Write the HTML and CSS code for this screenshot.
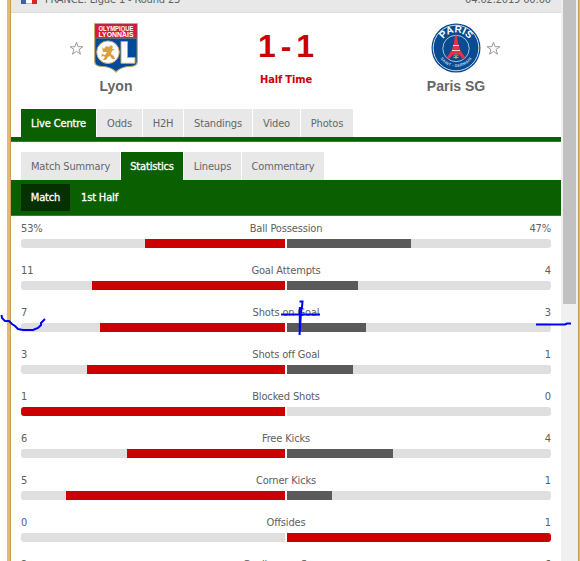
FILE: index.html
```
<!DOCTYPE html>
<html lang="en">
<head>
    <meta charset="UTF-8">
    <meta name="viewport" content="width=device-width, initial-scale=1.0">
    <title>Lyon 1-1 Paris SG | Statistics</title>
    <link rel="stylesheet" href="styles.css">
</head>
<body>
    <div class="window">
        <div class="content">
            <div class="match-header">
                <svg class="flag" width="16" height="11" viewBox="0 0 16 11">
                    <rect width="16" height="11" fill="#fff"/>
                    <rect width="5" height="11" fill="#3f62ae"/>
                    <rect x="11" width="5" height="11" fill="#e1251b"/>
                    <rect x=".5" y=".5" width="15" height="10" fill="none" stroke="#555" stroke-opacity=".4"/>
                </svg>
                <span class="league">FRANCE: Ligue 1 - Round 23</span>
                <span class="date">04.02.2019 00:00</span>
            </div>

            <div class="scoreboard">
                <div class="team home">
                    <div class="team-logo">
                        <svg class="star" width="15" height="15" viewBox="0 0 15 15"><path d="M7.5 1.2L9.1 5.7H13.9L10 8.5L11.5 13.2L7.5 10.4L3.5 13.2L5 8.5L1.1 5.7H5.9Z"/></svg>
                        <svg class="crest" width="44" height="50" viewBox="0 0 44 50">
                            <path d="M.7.7H43.3V39Q43 43 37 43.5Q27 43.5 22 49Q17 43.5 7 43.5Q1 43 .7 39Z" fill="#004a99" stroke="#c8aa6c" stroke-width="1.2"/>
                            <path d="M1.3 1.3H42.7V15H1.3Z" fill="#da1a32"/>
                            <path d="M1 15.2H43" stroke="#8b6c69"/>
                            <text x="22" y="7.7" textLength="35" lengthAdjust="spacingAndGlyphs">OLYMPIQUE</text>
                            <text x="22" y="14.1" textLength="35" lengthAdjust="spacingAndGlyphs">LYONNAIS</text>
                            <circle cx="14" cy="29.2" r="11.3" fill="#fff" stroke="#c8a665"/>
                            <path d="M8 24l2 2 2-3 3 1 2-2 2 2-1 2 3 0-3 2-1 3 3 2 1 3-3 0-2-3-2 1-2 3-3 0 2-3-2-1-2 1 1-3 3 1 2-3-4 0Z" fill="#d8a13b"/>
                            <path d="M27 18.5H33.5V34.5H41V40.3H27Z" fill="#fff" stroke="#c8a665"/>
                        </svg>
                    </div>
                    <div class="team-name">Lyon</div>
                </div>
                <div class="result">
                    <div class="score">1 - 1</div>
                    <div class="match-status">Half Time</div>
                </div>
                <div class="team away">
                    <div class="team-logo">
                        <svg class="crest" width="50" height="50" viewBox="0 0 50 50">
                            <defs>
                                <path id="arc-top" d="M9.5 25A15.5 15.5 0 0 1 40.5 25"/>
                                <path id="arc-bottom" d="M6 25A19 19 0 0 0 44 25"/>
                            </defs>
                            <circle cx="25" cy="25" r="24.5" fill="#074b91"/>
                            <circle cx="25" cy="25" r="22.8" fill="none" stroke="#dbe6f1" stroke-width=".9"/>
                            <circle cx="25" cy="25.5" r="13.2" fill="#074b91" stroke="#d5e1ed" stroke-width=".8"/>
                            <path d="M24 12.5H26L27.2 21L29.5 27.5L35 35.5H31Q29.5 31.5 25 31Q20.5 31.5 19 35.5H15L20.5 27.5L22.8 21Z" fill="#e92f43"/>
                            <path d="M21 27.5H29M22 22.5H28" stroke="#fff" stroke-width=".8"/>
                            <path d="M25 30.5V36M22.5 33q1-2 2.5 1q1.5-3 2.5-1M22.5 34.5h5" fill="none" stroke="#b8a36c"/>
                            <text class="psg-top"><textPath href="#arc-top" startOffset="50%" textLength="30">PARIS</textPath></text>
                            <text class="psg-bottom"><textPath href="#arc-bottom" startOffset="50%" textLength="37">SAINT - GERMAIN</textPath></text>
                        </svg>
                        <svg class="star" width="15" height="15" viewBox="0 0 15 15"><path d="M7.5 1.2L9.1 5.7H13.9L10 8.5L11.5 13.2L7.5 10.4L3.5 13.2L5 8.5L1.1 5.7H5.9Z"/></svg>
                    </div>
                    <div class="team-name">Paris SG</div>
                </div>
            </div>

            <ul class="tabs main-tabs">
                <li class="active w75">Live Centre</li>
                <li class="w45">Odds</li>
                <li class="w40">H2H</li>
                <li class="w68">Standings</li>
                <li class="w47">Video</li>
                <li class="w52">Photos</li>
            </ul>
            <div class="divider"></div>

            <ul class="tabs sub-tabs">
                <li class="w99">Match Summary</li>
                <li class="active w62">Statistics</li>
                <li class="w57">Lineups</li>
                <li class="w82">Commentary</li>
            </ul>
            <div class="period-bar">
                <span class="period selected">Match</span>
                <span class="period">1st Half</span>
            </div>

            <div class="stats">
                <div class="stat">
                    <div class="labels"><span>53%</span><span>Ball Possession</span><span>47%</span></div>
                    <div class="bars"><div class="bar left"><div class="fill red" style="width: 53%"></div></div><div class="bar"><div class="fill" style="width: 47%"></div></div></div>
                </div>
                <div class="stat">
                    <div class="labels"><span>11</span><span>Goal Attempts</span><span>4</span></div>
                    <div class="bars"><div class="bar left"><div class="fill red" style="width: 73.1%"></div></div><div class="bar"><div class="fill" style="width: 26.9%"></div></div></div>
                </div>
                <div class="stat">
                    <div class="labels"><span>7</span><span>Shots on Goal</span><span>3</span></div>
                    <div class="bars"><div class="bar left"><div class="fill red" style="width: 70%"></div></div><div class="bar"><div class="fill" style="width: 30%"></div></div></div>
                </div>
                <div class="stat">
                    <div class="labels"><span>3</span><span>Shots off Goal</span><span>1</span></div>
                    <div class="bars"><div class="bar left"><div class="fill red" style="width: 75%"></div></div><div class="bar"><div class="fill" style="width: 25%"></div></div></div>
                </div>
                <div class="stat">
                    <div class="labels"><span>1</span><span>Blocked Shots</span><span>0</span></div>
                    <div class="bars"><div class="bar left"><div class="fill red" style="width: 100%"></div></div><div class="bar"></div></div>
                </div>
                <div class="stat">
                    <div class="labels"><span>6</span><span>Free Kicks</span><span>4</span></div>
                    <div class="bars"><div class="bar left"><div class="fill red" style="width: 60%"></div></div><div class="bar"><div class="fill" style="width: 40%"></div></div></div>
                </div>
                <div class="stat">
                    <div class="labels"><span>5</span><span>Corner Kicks</span><span>1</span></div>
                    <div class="bars"><div class="bar left"><div class="fill red" style="width: 83%"></div></div><div class="bar"><div class="fill" style="width: 17%"></div></div></div>
                </div>
                <div class="stat">
                    <div class="labels"><span>0</span><span>Offsides</span><span>1</span></div>
                    <div class="bars"><div class="bar left"></div><div class="bar"><div class="fill red" style="width: 100%"></div></div></div>
                </div>
                <div class="stat">
                    <div class="labels"><span>2</span><span>Goalkeeper Saves</span><span>6</span></div>
                    <div class="bars"><div class="bar left"></div><div class="bar"></div></div>
                </div>
            </div>
        </div>
        <div class="scrollbar"><div class="thumb"></div></div>
    </div>

    <!-- pen marks -->
    <svg class="pen" width="580" height="561" viewBox="0 0 580 561">
        <path d="M1.5 315L2 318L5 321H9L12 324L15 326L18 329L23 330H33L38 328L41 325V323L45 319"/>
        <path d="M281 314.5H320M299.5 301.5H302.5L302 307L301 312L300.5 320L299.5 335M299.8 307V328"/>
        <path d="M536 324.5H565L567 323.5H571"/>
    </svg>
</body>
</html>
```
FILE: styles.css
```
body {
    margin: 0;
    background: #fff;
    color: #606060;
    font-family: "DejaVu Sans Condensed", Tahoma, "Noto Sans", sans-serif;
    font-size: 11px;
    letter-spacing: -0.15px;
    overflow: hidden;
}
.window {
    display: flex;
    box-sizing: border-box;
    width: 573px;
    height: 561px;
    margin-left: 7px;
    border-left: 3px solid #e9b86b;
    border-right: 1px solid #e9b86b;
    overflow: hidden;
    box-shadow: inset 1px 0 #c79c58, inset -1px 0 #c79c58;
}
.content {
    width: 550px;
    margin-left: 1px;
    flex: none;
}
.match-header {
    display: flex;
    align-items: flex-end;
    box-sizing: border-box;
    height: 13px;
    padding: 0 10px;
    background: #e8e8e8;
    border-bottom: 1px solid #dcdcdc;
    line-height: 14px;
}
.flag {
    margin-bottom: 8px;
}
.league {
    margin: 0 auto 5px 8px;
}
.date {
    margin-bottom: 5px;
}
.scoreboard {
    display: flex;
    justify-content: space-between;
    height: 96px;
    padding: 0 32px;
}
.team {
    width: 146px;
    padding-top: 10px;
    text-align: center;
}
.team-logo {
    display: flex;
    align-items: center;
    height: 50px;
}
.home .team-logo {
    padding-left: 26px;
    gap: 10px;
}
.away .team-logo {
    padding-left: 48px;
    gap: 5px;
}
.star path {
    fill: #fff;
    stroke: #999;
}
.crest text {
    fill: #fff;
    font-family: "Liberation Sans", sans-serif;
    font-weight: bold;
    font-size: 7px;
    letter-spacing: 0;
    text-anchor: middle;
}
.crest .psg-top {
    font-size: 10px;
}
.crest .psg-bottom {
    font-size: 4px;
    fill: #bdd0e3;
}
.team-name {
    color: #666;
    font: bold 14px/18px "Liberation Sans", Arial, sans-serif;
    letter-spacing: 0;
    padding-top: 4px;
}
.result {
    width: 120px;
    color: #c00;
    text-align: center;
}
.score {
    padding-top: 13px;
    font: bold 32px/40px "Liberation Sans", Arial, sans-serif;
    letter-spacing: 0;
    word-spacing: -4px;
}
.match-status {
    font-weight: bold;
    line-height: 14px;
    padding-top: 7px;
}
.tabs {
    display: flex;
    gap: 1px;
    margin: 0;
    padding: 0 10px;
    list-style: none;
}
.tabs li {
    height: 28px;
    background: #e8e8e8;
    color: #666;
    line-height: 30px;
    text-align: center;
    white-space: nowrap;
}
.tabs .active {
    background: #0a5f00;
    color: #fff;
    -webkit-text-stroke: 0.3px #fff;
}
.w40 { width: 40px; }
.w45 { width: 45px; }
.w47 { width: 47px; }
.w52 { width: 52px; }
.w57 { width: 57px; }
.w62 { width: 62px; }
.w68 { width: 68px; }
.w75 { width: 75px; }
.w82 { width: 82px; }
.w99 { width: 99px; }
.divider {
    height: 4px;
    margin-bottom: 10px;
    background: #0a5f00;
    border-bottom: 1px solid #388030;
}
.period-bar {
    display: flex;
    box-sizing: border-box;
    height: 36px;
    padding: 4px 10px;
    background: #0a5f00;
    border-bottom: 1px solid #388030;
    color: #fff;
    line-height: 28px;
}
.period {
    height: 27px;
    padding: 0 11px;
    -webkit-text-stroke: 0.3px #fff;
}
.selected {
    width: 49px;
    padding: 0;
    background: #053000;
    text-align: center;
}
.stats {
    padding: 5px 10px 0;
}
.stat {
    height: 42px;
}
.labels {
    display: grid;
    grid-template-columns: 60px 1fr 60px;
    height: 18px;
    line-height: 15px;
    text-align: center;
}
.labels span:first-child {
    text-align: left;
}
.labels span:last-child {
    text-align: right;
}
.bars {
    display: flex;
    gap: 2px;
}
.bar {
    display: flex;
    width: 264px;
    height: 9px;
    background: #dfdfdf;
    border-radius: 0 3px 3px 0;
    overflow: hidden;
}
.bar.left {
    justify-content: flex-end;
    border-radius: 3px 0 0 3px;
}
.fill {
    background: #5a5a5a;
}
.fill.red {
    background: #c00;
}
.scrollbar {
    box-sizing: border-box;
    width: 17px;
    padding: 0 2px;
    background: #f0f0f0;
}
.thumb {
    height: 304px;
    background: #c1c1c1;
}
.pen {
    position: absolute;
    top: 0;
    left: 0;
    fill: none;
    stroke: #00f;
    stroke-width: 2;
    pointer-events: none;
}
```
